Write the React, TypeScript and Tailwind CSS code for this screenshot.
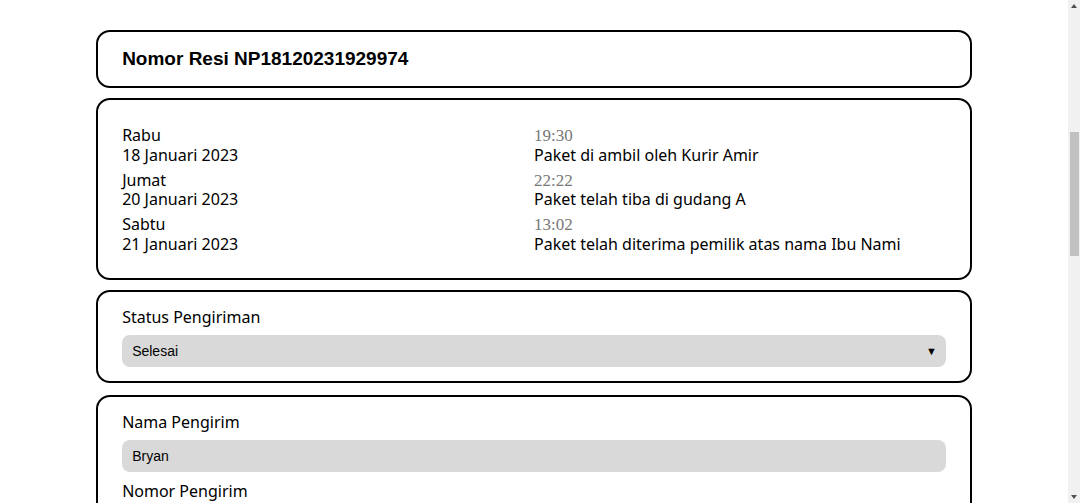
import React from "react";

// Riwayat perjalanan paket
const riwayat = [
  { hari: "Rabu", tanggal: "18 Januari 2023", jam: "19:30", ket: "Paket di ambil oleh Kurir Amir" },
  { hari: "Jumat", tanggal: "20 Januari 2023", jam: "22:22", ket: "Paket telah tiba di gudang A" },
  { hari: "Sabtu", tanggal: "21 Januari 2023", jam: "13:02", ket: "Paket telah diterima pemilik atas nama Ibu Nami" },
];

const fields = [
  { label: "Nama Pengirim", value: "Bryan" },
  { label: "Nomor Pengirim", value: "081234567890" },
  { label: "Alamat Pengirim", value: "Jl. Merdeka No. 10, Bandung" },
  { label: "Nama Penerima", value: "Nami" },
  { label: "Nomor Penerima", value: "089876543210" },
  { label: "Alamat Penerima", value: "Jl. Sudirman No. 5, Jakarta" },
];

const labelFont = { fontFamily: '"Noto Sans", sans-serif' };
const inputFont = { fontFamily: '"Liberation Sans", Arial, sans-serif' };

// Scrollbar jendela (seperti di tangkapan layar)
function FakeScrollbar() {
  return (
    <div className="fixed top-0 right-0 h-screen w-[12px] bg-[#f1f1f1] pointer-events-none">
      <svg className="absolute top-[4px] left-[3px]" width="6" height="4" viewBox="0 0 6 4">
        <path d="M0 4 L3 0 L6 4 Z" fill="#505050" />
      </svg>
      <div className="absolute top-[132px] left-[2px] right-[1px] h-[124px] bg-[#c1c1c1]" />
      <svg className="absolute bottom-[4px] left-[3px]" width="6" height="4" viewBox="0 0 6 4">
        <path d="M0 0 L6 0 L3 4 Z" fill="#505050" />
      </svg>
    </div>
  );
}

export default function App() {
  return (
    <div className="min-h-screen bg-white">
      <div className="mr-[12px]">
        <div className="w-[82%] mx-auto pt-[30px] pb-[40px] flex flex-col">
          {/* Nomor resi */}
          <div className="h-[58px] flex items-center px-[24px] border-2 border-black rounded-[14px]">
            <h1 className="text-[19px] font-bold text-black" style={inputFont}>
              Nomor Resi NP18120231929974
            </h1>
          </div>

          {/* Riwayat */}
          <div className="mt-[10px] px-[24px] pt-[26px] pb-[24px] border-2 border-black rounded-[14px]">
            <div className="flex flex-col gap-[5.5px]">
              {riwayat.map((r, i) => (
                <div key={i} className="grid grid-cols-2 text-[16px] leading-[19.5px] text-black">
                  <div style={labelFont}>
                    <div>{r.hari}</div>
                    <div>{r.tanggal}</div>
                  </div>
                  <div>
                    <div
                      className="text-[17px] text-[#777777]"
                      style={{ fontFamily: '"Liberation Serif", serif' }}
                    >
                      {r.jam}
                    </div>
                    <div style={labelFont}>{r.ket}</div>
                  </div>
                </div>
              ))}
            </div>
          </div>

          {/* Status */}
          <div className="mt-[10px] px-[24px] pt-[15px] pb-[14px] border-2 border-black rounded-[14px]">
            <label className="block text-[16px] leading-[20px] text-black mb-[8px]" style={labelFont}>
              Status Pengiriman
            </label>
            <div className="relative">
              <select
                defaultValue="Selesai"
                className="w-full h-[32px] appearance-none bg-[#d9d9d9] rounded-[8px] px-[10px] text-[14px] text-black outline-none"
                style={inputFont}
              >
                <option>Dikirim</option>
                <option>Diproses</option>
                <option>Selesai</option>
              </select>
              <span className="absolute right-[9px] top-[8px] text-[11px] leading-[16px] text-black pointer-events-none">
                ▼
              </span>
            </div>
          </div>

          {/* Data pengirim & penerima */}
          <div className="mt-[12px] px-[24px] pt-[15px] pb-[14px] border-2 border-black rounded-[14px] flex flex-col gap-[9px]">
            {fields.map((f, i) => (
              <div key={i}>
                <label className="block text-[16px] leading-[20px] text-black mb-[8px]" style={labelFont}>
                  {f.label}
                </label>
                <input
                  readOnly
                  value={f.value}
                  className="w-full h-[32px] bg-[#d9d9d9] rounded-[8px] px-[10px] text-[14px] text-black outline-none"
                  style={inputFont}
                />
              </div>
            ))}
          </div>
        </div>
      </div>
      <FakeScrollbar />
    </div>
  );
}
